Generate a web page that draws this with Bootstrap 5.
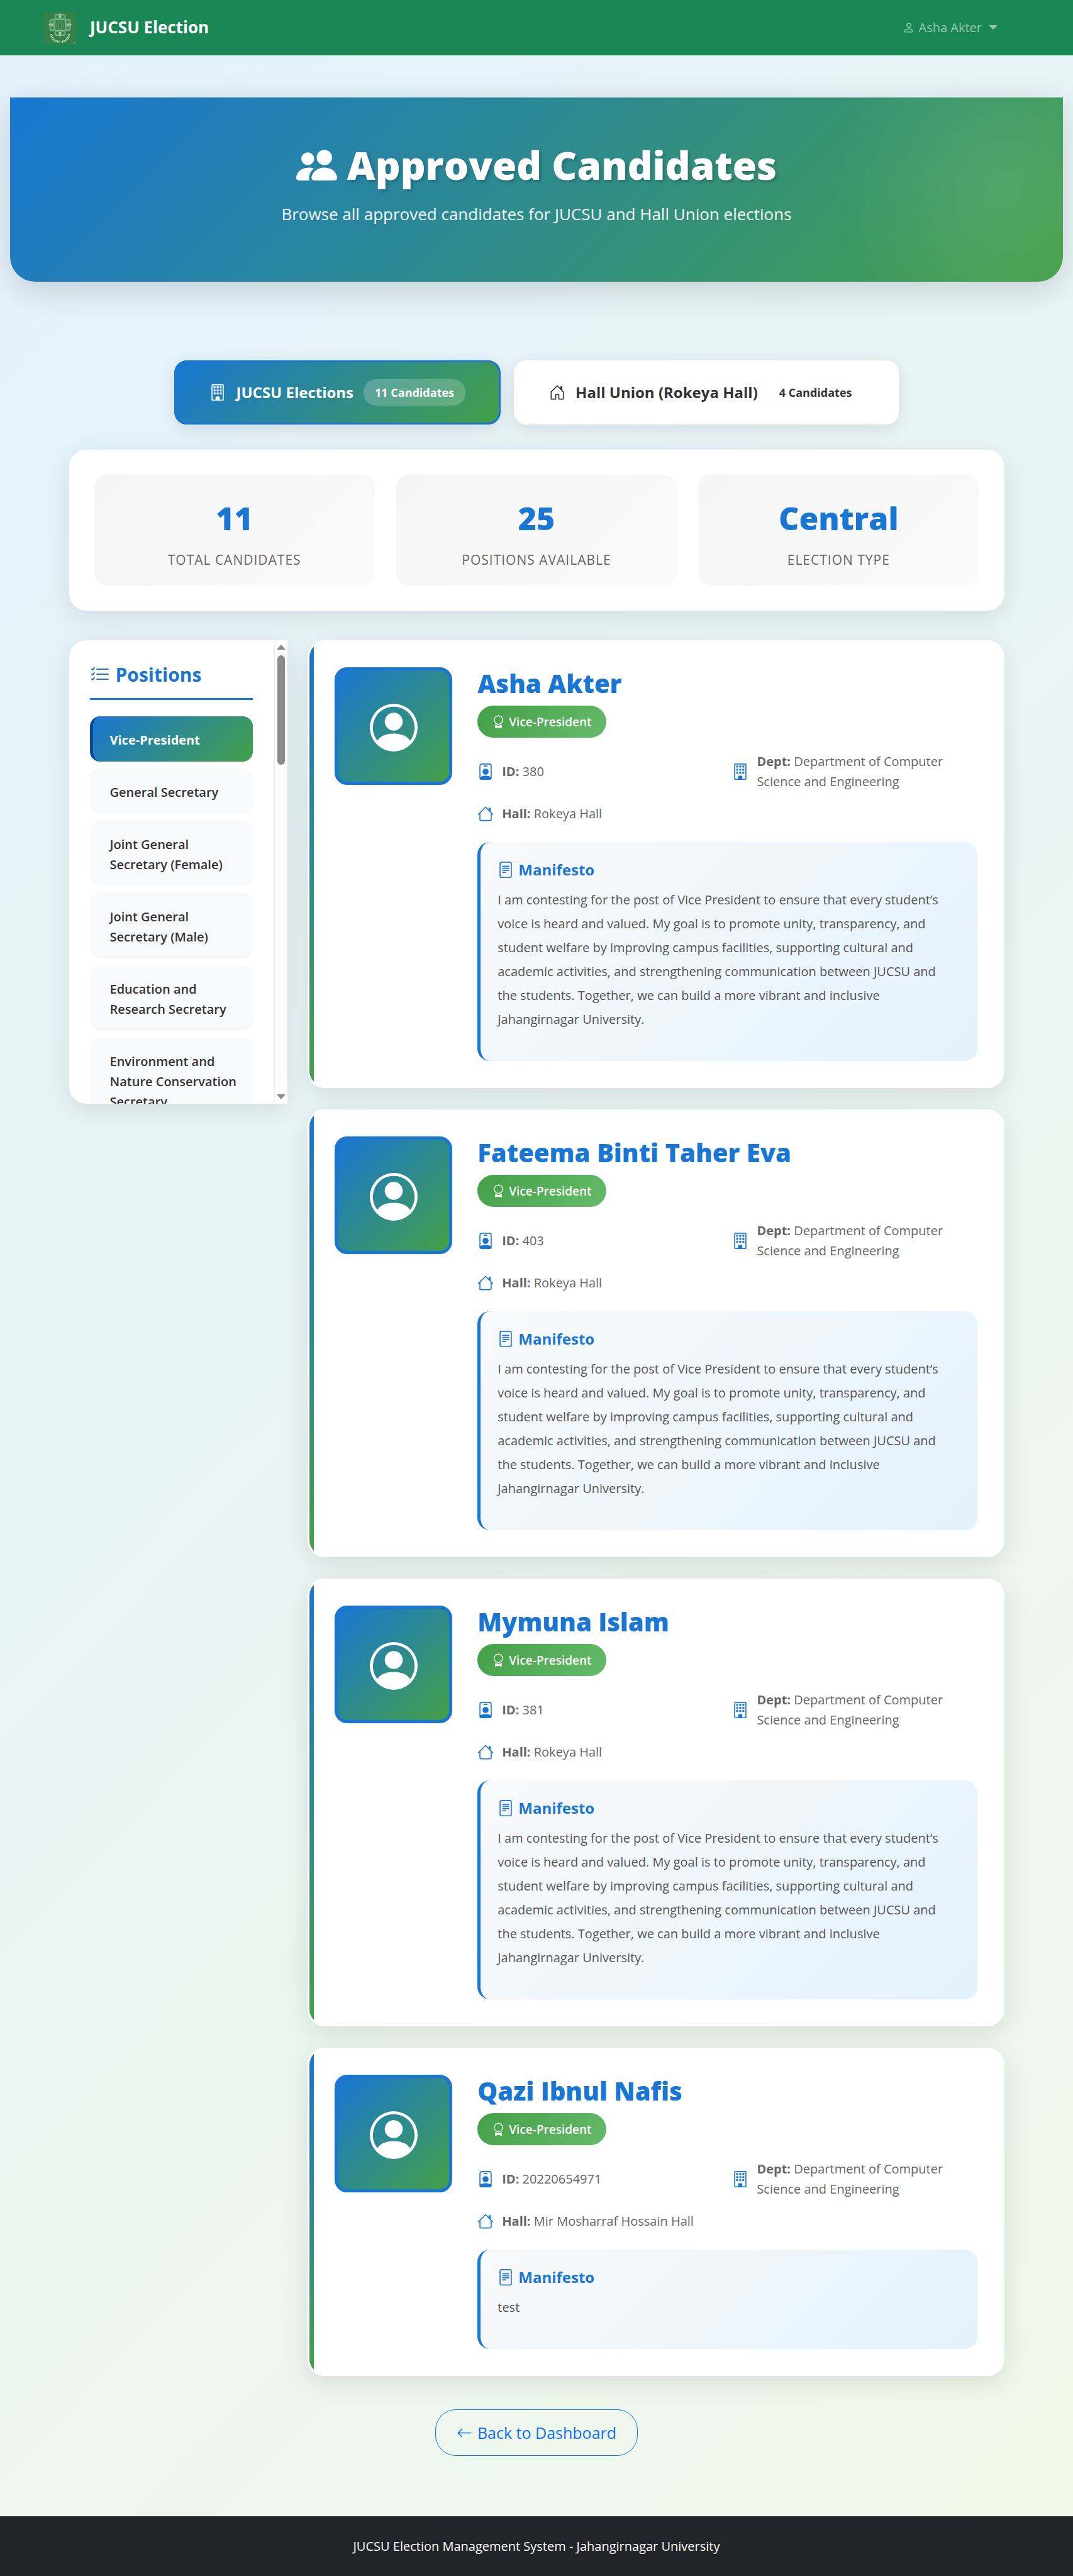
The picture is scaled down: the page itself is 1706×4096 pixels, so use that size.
<!DOCTYPE html>
<html lang="en">
<head>
<meta charset="utf-8">
<meta name="viewport" content="width=device-width, initial-scale=1">
<title>Approved Candidates - JUCSU Election</title>
<link href="https://cdn.jsdelivr.net/npm/bootstrap@5.3.0/dist/css/bootstrap.min.css" rel="stylesheet">
<style>
:root{--blue:#1976d2;--green:#43a047;--brand-grad:linear-gradient(135deg,#1976d2 0%,#43a047 100%)}
body{font-family:"Open Sans","Noto Sans",sans-serif;font-size:20px;line-height:32px;color:#333;background:linear-gradient(135deg,#e3f2fd 0%,#f1f8e9 100%);min-height:100vh}
.bi{width:1em;height:1em;fill:currentColor;flex:none}
.top-nav{background:#198754;height:88px;padding:0 112px 0 69px}
.brand-name{font-size:26px;line-height:32px;font-weight:700;color:#fff;margin-left:21px;padding-bottom:3px}
.crest{width:53px;height:53px}
.user-link{color:rgba(255,255,255,.55);font-size:20px;padding:8px}
.user-link:hover{color:#fff}
.user-link .bi{vertical-align:-3px}
.user-link.dropdown-toggle::after{margin-left:11px;border-width:7px 7px 0;vertical-align:4px}
.hero{margin:67px 16px 125px;padding:67px 32px 88px;color:#fff;border-radius:0 0 40px 40px;background:radial-gradient(circle 265px at calc(100% - 100px) 139px,rgba(255,255,255,.1),rgba(255,255,255,0)),var(--brand-grad);box-shadow:0 13px 53px rgba(0,0,0,.15)}
.hero h1{font-size:62px;line-height:80px;font-weight:800;margin:0 0 18px;gap:16px;text-shadow:3px 3px 5px rgba(0,0,0,.2)}
.hero h1 .bi{font-size:65px}
.hero p{font-size:26px;line-height:40px;margin:0;opacity:.95}
.page-wrap{max-width:1519px;padding:0 16px;margin:0 auto}
.tab-row{gap:21px}
.tab-btn{background:#fff;color:#333;border:3px solid transparent;background-clip:border-box;border-radius:20px;padding:27px 53px;height:102px;font-size:24px;font-weight:700;gap:16px;box-shadow:0 7px 27px rgba(0,0,0,.1)}
.tab-btn.active{background:var(--brand-grad) padding-box,#1976d2 border-box;border-color:var(--blue);color:#fff}
.tab-btn .bi{font-size:26px}
.tab-count{font-size:18px;font-weight:700;line-height:28px;padding:7px 18px;border-radius:20px;background:rgba(255,255,255,.2)}
.panel{background:#fff;border-radius:27px;box-shadow:0 10px 40px rgba(0,0,0,.1)}
.stats{padding:40px;gap:34px;margin:40px 0 47px}
.stat-box{flex:1 1 0;height:176px;border-radius:20px;background:linear-gradient(135deg,#f5f5f5,#fafafa);text-align:center;padding:33px 20px 0}
.stat-num{font-size:50px;line-height:72px;font-weight:800;color:var(--blue)}
.stat-label{font-size:21px;line-height:32px;margin-top:14px;color:#666;letter-spacing:1px;text-transform:uppercase}
.layout-row{--bs-gutter-x:32px}
.side{height:737px;overflow:hidden;border-radius:27px 0 0 27px}
.side-inner{padding:35px 34px 0 33px;min-width:0}
.side h2{font-size:30px;line-height:40px;font-weight:700;color:var(--blue);gap:9px;padding-bottom:17px;margin:0 0 26px;border-bottom:3px solid var(--blue)}
.side h2 .bi{font-size:32px}
.pos-link{display:block;background:#f8f9fa;border-left:5px solid transparent;border-radius:16px;padding:22px 15px 18px 27px;font-size:20px;font-weight:600;color:#333;text-decoration:none;margin-bottom:11px}
.pos-link.active{background:var(--brand-grad) padding-box,#0d47a1 border-box;color:#fff;font-weight:700}
.scroll-track{width:21px;background:#fcfcfc;border-left:1px solid #edf3f5;padding:7px 0;flex:none}
.scroll-track svg{width:14px;height:8px;fill:#8b8b8b}
.scroll-thumb{width:12px;height:174px;border-radius:6px;background:#8b8b8b;margin-top:9px}
.cand{position:relative;overflow:hidden;border:3px solid #fff;padding:40px;gap:40px;margin-bottom:34px}
.cand::before{content:"";position:absolute;left:0;top:0;bottom:0;width:7px;background:linear-gradient(180deg,#1976d2,#43a047)}
.avatar{width:187px;height:187px;flex:none;border:5px solid var(--blue);border-radius:20px;background:var(--brand-grad);color:#fff}
.avatar .bi{font-size:76px;margin-top:5px}
.cand h3{font-size:40px;line-height:51px;font-weight:800;color:var(--blue);margin:0 0 10px}
.post-pill{display:inline-flex;align-items:center;gap:6px;height:51px;padding:0 23px;border-radius:26px;font-size:19px;font-weight:600;color:#fff;background:linear-gradient(135deg,#43a047,#66bb6a)}
.post-pill .bi{font-size:21px}
.facts{display:grid;grid-template-columns:1fr 1fr;column-gap:16px;row-gap:19px;margin:22px 0 29px;color:#666;font-size:20px}
.fact{gap:13px}
.fact .bi{font-size:26px;color:var(--blue)}
.manifesto{border-left:5px solid var(--blue);border-radius:20px;padding:28px 40px 26px 27px;background:linear-gradient(135deg,#f8f9fa,#e3f2fd);color:#555}
.manifesto h4{font-size:24px;line-height:31px;font-weight:700;color:var(--blue);gap:7px;margin:0 0 14px}
.manifesto h4 .bi{font-size:26px}
.manifesto p{font-size:20px;line-height:38px;margin:0 0 21px}
.back-row{margin-top:53px}
.back-btn{font-size:25px;line-height:40px;padding:16px 33px;border-radius:33px;gap:8px}
.site-foot{background:#212529;color:#fff;height:96px;margin-top:96px;font-size:20px}
.site-foot p{margin:0}
</style>
</head>
<body class="d-flex flex-column">
<svg class="d-none" xmlns="http://www.w3.org/2000/svg">
<symbol id="i-people" viewBox="0 0 16 16"><path d="M7 14s-1 0-1-1 1-4 5-4 5 3 5 4-1 1-1 1zm4-6a3 3 0 1 0 0-6 3 3 0 0 0 0 6m-5.784 6A2.240 2.240 0 0 1 5 13c0-1.355.68-2.750 1.936-3.720A6.300 6.300 0 0 0 5 9c-4 0-5 3-5 4s1 1 1 1zM4.500 8a2.500 2.500 0 1 0 0-5 2.500 2.500 0 0 0 0 5"/></symbol>
<symbol id="i-person" viewBox="0 0 16 16"><path d="M8 8a3 3 0 1 0 0-6 3 3 0 0 0 0 6m2-3a2 2 0 1 1-4 0 2 2 0 0 1 4 0m4 8c0 1-1 1-1 1H3s-1 0-1-1 1-4 6-4 6 3 6 4m-1-.004c-.001-.246-.154-.986-.832-1.664C11.516 10.680 10.289 10 8 10s-3.516.68-4.168 1.332c-.678.678-.83 1.418-.832 1.664z"/></symbol>
<symbol id="i-building" viewBox="0 0 16 16"><path d="M4 2.500a.5.5 0 0 1 .5-.5h1a.5.5 0 0 1 .5.5v1a.5.5 0 0 1-.5.5h-1a.5.5 0 0 1-.5-.5zm3 0a.5.5 0 0 1 .5-.5h1a.5.5 0 0 1 .5.5v1a.5.5 0 0 1-.5.5h-1a.5.5 0 0 1-.5-.5zm3.500-.5a.5.5 0 0 0-.5.5v1a.5.5 0 0 0 .5.5h1a.5.5 0 0 0 .5-.5v-1a.5.5 0 0 0-.5-.5zM4 5.500a.5.5 0 0 1 .5-.5h1a.5.5 0 0 1 .5.5v1a.5.5 0 0 1-.5.5h-1a.5.5 0 0 1-.5-.5zM7.500 5a.5.5 0 0 0-.5.5v1a.5.5 0 0 0 .5.5h1a.5.5 0 0 0 .5-.5v-1a.5.5 0 0 0-.5-.5zm2.500.5a.5.5 0 0 1 .5-.5h1a.5.5 0 0 1 .5.5v1a.5.5 0 0 1-.5.5h-1a.5.5 0 0 1-.5-.5zM4.500 8a.5.5 0 0 0-.5.5v1a.5.5 0 0 0 .5.5h1a.5.5 0 0 0 .5-.5v-1a.5.5 0 0 0-.5-.5zm2.500.5a.5.5 0 0 1 .5-.5h1a.5.5 0 0 1 .5.5v1a.5.5 0 0 1-.5.5h-1a.5.5 0 0 1-.5-.5zm3.500-.5a.5.5 0 0 0-.5.5v1a.5.5 0 0 0 .5.5h1a.5.5 0 0 0 .5-.5v-1a.5.5 0 0 0-.5-.5z"/><path d="M2 1a1 1 0 0 1 1-1h10a1 1 0 0 1 1 1v14a1 1 0 0 1-1 1H3a1 1 0 0 1-1-1zm11 0H3v14h3v-2.500a.5.5 0 0 1 .5-.5h3a.5.5 0 0 1 .5.5V15h3z"/></symbol>
<symbol id="i-housedoor" viewBox="0 0 16 16"><path d="M8.354 1.146a.5.5 0 0 0-.708 0l-6 6A.5.5 0 0 0 1.500 7.500v7a.5.5 0 0 0 .5.5h4.500a.5.5 0 0 0 .5-.5v-4h2v4a.5.5 0 0 0 .5.5H14a.5.5 0 0 0 .5-.5v-7a.5.5 0 0 0-.146-.354L13 5.793V2.500a.5.5 0 0 0-.5-.5h-1a.5.5 0 0 0-.5.5v1.293zM2.500 14V7.707l5.500-5.500 5.500 5.500V14H10v-4a.5.5 0 0 0-.5-.5h-3a.5.5 0 0 0-.5.5v4z"/></symbol>
<symbol id="i-house" viewBox="0 0 16 16"><path d="M8.707 1.500a1 1 0 0 0-1.414 0L.646 8.146a.5.5 0 0 0 .708.708L2 8.207V13.500A1.500 1.500 0 0 0 3.500 15h9a1.500 1.500 0 0 0 1.500-1.500V8.207l.646.647a.5.5 0 0 0 .708-.708L13 5.793V2.500a.5.5 0 0 0-.5-.5h-1a.5.5 0 0 0-.5.5v1.293zM13 7.207V13.500a.5.5 0 0 1-.5.5h-9a.5.5 0 0 1-.5-.5V7.207l5-5z"/></symbol>
<symbol id="i-listcheck" viewBox="0 0 16 16"><path fill-rule="evenodd" d="M5 11.500a.5.5 0 0 1 .5-.5h9a.5.5 0 0 1 0 1h-9a.5.5 0 0 1-.5-.5m0-4a.5.5 0 0 1 .5-.5h9a.5.5 0 0 1 0 1h-9a.5.5 0 0 1-.5-.5m0-4a.5.5 0 0 1 .5-.5h9a.5.5 0 0 1 0 1h-9a.5.5 0 0 1-.5-.5M3.854 2.146a.5.5 0 0 1 0 .708l-1.500 1.500a.5.5 0 0 1-.708 0l-.5-.5a.5.5 0 1 1 .708-.708L2 3.293l1.146-1.147a.5.5 0 0 1 .708 0m0 4a.5.5 0 0 1 0 .708l-1.500 1.500a.5.5 0 0 1-.708 0l-.5-.5a.5.5 0 1 1 .708-.708L2 7.293l1.146-1.147a.5.5 0 0 1 .708 0m0 4a.5.5 0 0 1 0 .708l-1.500 1.500a.5.5 0 0 1-.708 0l-.5-.5a.5.5 0 0 1 .708-.708l.146.147 1.146-1.147a.5.5 0 0 1 .708 0"/></symbol>
<symbol id="i-circle" viewBox="0 0 16 16"><path d="M11 6a3 3 0 1 1-6 0 3 3 0 0 1 6 0"/><path fill-rule="evenodd" d="M0 8a8 8 0 1 1 16 0A8 8 0 0 1 0 8m8-7a7 7 0 0 0-5.468 11.370C3.242 11.226 4.805 10 8 10s4.757 1.225 5.468 2.370A7 7 0 0 0 8 1"/></symbol>
<symbol id="i-award" viewBox="0 0 16 16"><path d="M9.669.864 8 0 6.331.864l-1.858.282-.842 1.680-1.337 1.320L2.600 6l-.306 1.854 1.337 1.320.842 1.680 1.858.282L8 12l1.669-.864 1.858-.282.842-1.680 1.337-1.320L13.400 6l.306-1.854-1.337-1.320-.842-1.680zm1.196 1.193.684 1.365 1.086 1.072L12.387 6l.248 1.506-1.086 1.072-.684 1.365-1.510.229L8 10.874l-1.355-.702-1.510-.229-.684-1.365-1.086-1.072L3.614 6l-.25-1.506 1.087-1.072.684-1.365 1.510-.229L8 1.126l1.356.702z"/><path d="M4 11.794V16l4-1 4 1v-4.206l-2.018.306L8 13.126 6.018 12.100z"/></symbol>
<symbol id="i-badge" viewBox="0 0 16 16"><path d="M6.500 2a.5.5 0 0 0 0 1h3a.5.5 0 0 0 0-1zM11 8a3 3 0 1 1-6 0 3 3 0 0 1 6 0"/><path d="M4.500 0A2.500 2.500 0 0 0 2 2.500V14a2 2 0 0 0 2 2h8a2 2 0 0 0 2-2V2.500A2.500 2.500 0 0 0 11.500 0zM3 2.500A1.500 1.500 0 0 1 4.500 1h7A1.500 1.500 0 0 1 13 2.500v10.795a4.200 4.200 0 0 0-.776-.492C11.392 12.387 10.063 12 8 12s-3.392.387-4.224.803a4.200 4.200 0 0 0-.776.492z"/></symbol>
<symbol id="i-file" viewBox="0 0 16 16"><path d="M5 4a.5.5 0 0 0 0 1h6a.5.5 0 0 0 0-1zm-.5 2.500A.5.5 0 0 1 5 6h6a.5.5 0 0 1 0 1H5a.5.5 0 0 1-.5-.5M5 8a.5.5 0 0 0 0 1h6a.5.5 0 0 0 0-1zm0 2a.5.5 0 0 0 0 1h3a.5.5 0 0 0 0-1z"/><path d="M2 2a2 2 0 0 1 2-2h8a2 2 0 0 1 2 2v12a2 2 0 0 1-2 2H4a2 2 0 0 1-2-2zm10-1H4a1 1 0 0 0-1 1v12a1 1 0 0 0 1 1h8a1 1 0 0 0 1-1V2a1 1 0 0 0-1-1"/></symbol>
<symbol id="i-arrow" viewBox="0 0 16 16"><path fill-rule="evenodd" d="M15 8a.5.5 0 0 0-.5-.5H2.707l3.147-3.146a.5.5 0 1 0-.708-.708l-4 4a.5.5 0 0 0 0 .708l4 4a.5.5 0 0 0 .708-.708L2.707 8.500H14.500A.5.5 0 0 0 15 8"/></symbol>
</svg>

<nav class="top-nav navbar flex-nowrap justify-content-between">
  <a class="navbar-brand d-flex align-items-center p-0 m-0" href="#">
    <svg class="crest" viewBox="0 0 60 60" aria-hidden="true">
      <rect width="60" height="60" fill="#338149"/>
      <g fill="#5da070" stroke="#8cc39b" stroke-width="1"><rect x="20.500" y="5.500" width="19" height="9" rx="2"/><rect x="11.500" y="14.500" width="9" height="20" rx="2"/><rect x="39.500" y="14.500" width="9" height="20" rx="2"/><rect x="20.500" y="34.500" width="19" height="9" rx="2"/></g>
      <path d="M30 3l3 4h-6zM30 46l3-4h-6zM9 24l4-3v6zM51 24l-4-3v6z" fill="#a9d4b4"/>
      <g fill="#338149"><circle cx="25" cy="10" r="2"/><circle cx="35" cy="10" r="2"/><circle cx="16" cy="19" r="2"/><circle cx="16" cy="30" r="2"/><circle cx="44" cy="19" r="2"/><circle cx="44" cy="30" r="2"/><circle cx="25" cy="39" r="2"/><circle cx="35" cy="39" r="2"/></g>
      <g fill="#a9d4b4"><circle cx="30" cy="10" r="2"/><circle cx="16" cy="24" r="2"/><circle cx="44" cy="24" r="2"/><circle cx="30" cy="39" r="2"/></g>
      <rect x="21" y="15" width="18" height="19" fill="#338149" stroke="#8cc39b"/>
      <path d="M26 17q-4 9-2 12l3 2q2-3 0-8zM34 17q4 9 2 12l-3 2q-2-3 0-8zM30 17q-4 8-3 12l3 3 3-3q1-4-3-12M30 31v3" fill="none" stroke="#5f9a68" stroke-width="1"/>
      <path d="M14 41q1 12 15 14M46 41q-1 12-14 14" fill="none" stroke="#a9d4b4" stroke-width="4" stroke-dasharray="2 1"/>
      <circle cx="56" cy="57" r="1" fill="#8cc39b"/>
    </svg>
    <span class="brand-name">JUCSU Election</span>
  </a>
  <div class="dropdown">
    <a class="user-link dropdown-toggle text-decoration-none" href="#" role="button" data-bs-toggle="dropdown"><svg class="bi"><use href="#i-person"/></svg> Asha Akter</a>
  </div>
</nav>

<header class="hero text-center">
  <h1 class="d-flex justify-content-center align-items-center"><svg class="bi"><use href="#i-people"/></svg>Approved Candidates</h1>
  <p>Browse all approved candidates for JUCSU and Hall Union elections</p>
</header>

<main class="page-wrap w-100">
  <div class="tab-row d-flex justify-content-center flex-wrap">
    <button type="button" class="tab-btn active d-flex align-items-center"><svg class="bi"><use href="#i-building"/></svg>JUCSU Elections<span class="tab-count">11 Candidates</span></button>
    <button type="button" class="tab-btn d-flex align-items-center"><svg class="bi"><use href="#i-housedoor"/></svg>Hall Union (Rokeya Hall)<span class="tab-count">4 Candidates</span></button>
  </div>

  <section class="panel stats d-flex">
    <div class="stat-box"><div class="stat-num">11</div><div class="stat-label">Total Candidates</div></div>
    <div class="stat-box"><div class="stat-num">25</div><div class="stat-label">Positions Available</div></div>
    <div class="stat-box"><div class="stat-num">Central</div><div class="stat-label">Election Type</div></div>
  </section>

  <div class="row layout-row">
    <aside class="col-3">
      <div class="side panel d-flex">
        <div class="side-inner flex-grow-1">
          <h2 class="d-flex align-items-center"><svg class="bi"><use href="#i-listcheck"/></svg>Positions</h2>
          <nav>
            <a class="pos-link active" href="#">Vice-President</a>
            <a class="pos-link" href="#">General Secretary</a>
            <a class="pos-link" href="#">Joint General Secretary (Female)</a>
            <a class="pos-link" href="#">Joint General Secretary (Male)</a>
            <a class="pos-link" href="#">Education and Research Secretary</a>
            <a class="pos-link" href="#">Environment and Nature Conservation Secretary</a>
          </nav>
        </div>
        <div class="scroll-track d-flex flex-column align-items-center" aria-hidden="true">
          <svg viewBox="0 0 14 8"><path d="M7 0l7 8H0z"/></svg>
          <div class="scroll-thumb"></div>
          <svg class="mt-auto" viewBox="0 0 14 8"><path d="M7 8L0 0h14z"/></svg>
        </div>
      </div>
    </aside>

    <div class="col-9">
      <article class="cand panel d-flex align-items-start">
        <div class="avatar d-flex align-items-center justify-content-center"><svg class="bi"><use href="#i-circle"/></svg></div>
        <div class="flex-grow-1">
          <h3>Asha Akter</h3>
          <div class="d-flex"><span class="post-pill"><svg class="bi"><use href="#i-award"/></svg>Vice-President</span></div>
          <div class="facts">
            <div class="fact d-flex align-items-center"><svg class="bi"><use href="#i-badge"/></svg><span><strong>ID:</strong> 380</span></div>
            <div class="fact d-flex align-items-center"><svg class="bi"><use href="#i-building"/></svg><span><strong>Dept:</strong> Department of Computer Science and Engineering</span></div>
            <div class="fact d-flex align-items-center"><svg class="bi"><use href="#i-house"/></svg><span><strong>Hall:</strong> Rokeya Hall</span></div>
          </div>
          <div class="manifesto">
            <h4 class="d-flex align-items-center"><svg class="bi"><use href="#i-file"/></svg>Manifesto</h4>
            <p>I am contesting for the post of Vice President to ensure that every student’s voice is heard and valued. My goal is to promote unity, transparency, and student welfare by improving campus facilities, supporting cultural and academic activities, and strengthening communication between JUCSU and the students. Together, we can build a more vibrant and inclusive Jahangirnagar University.</p>
          </div>
        </div>
      </article>

      <article class="cand panel d-flex align-items-start">
        <div class="avatar d-flex align-items-center justify-content-center"><svg class="bi"><use href="#i-circle"/></svg></div>
        <div class="flex-grow-1">
          <h3>Fateema Binti Taher Eva</h3>
          <div class="d-flex"><span class="post-pill"><svg class="bi"><use href="#i-award"/></svg>Vice-President</span></div>
          <div class="facts">
            <div class="fact d-flex align-items-center"><svg class="bi"><use href="#i-badge"/></svg><span><strong>ID:</strong> 403</span></div>
            <div class="fact d-flex align-items-center"><svg class="bi"><use href="#i-building"/></svg><span><strong>Dept:</strong> Department of Computer Science and Engineering</span></div>
            <div class="fact d-flex align-items-center"><svg class="bi"><use href="#i-house"/></svg><span><strong>Hall:</strong> Rokeya Hall</span></div>
          </div>
          <div class="manifesto">
            <h4 class="d-flex align-items-center"><svg class="bi"><use href="#i-file"/></svg>Manifesto</h4>
            <p>I am contesting for the post of Vice President to ensure that every student’s voice is heard and valued. My goal is to promote unity, transparency, and student welfare by improving campus facilities, supporting cultural and academic activities, and strengthening communication between JUCSU and the students. Together, we can build a more vibrant and inclusive Jahangirnagar University.</p>
          </div>
        </div>
      </article>

      <article class="cand panel d-flex align-items-start">
        <div class="avatar d-flex align-items-center justify-content-center"><svg class="bi"><use href="#i-circle"/></svg></div>
        <div class="flex-grow-1">
          <h3>Mymuna Islam</h3>
          <div class="d-flex"><span class="post-pill"><svg class="bi"><use href="#i-award"/></svg>Vice-President</span></div>
          <div class="facts">
            <div class="fact d-flex align-items-center"><svg class="bi"><use href="#i-badge"/></svg><span><strong>ID:</strong> 381</span></div>
            <div class="fact d-flex align-items-center"><svg class="bi"><use href="#i-building"/></svg><span><strong>Dept:</strong> Department of Computer Science and Engineering</span></div>
            <div class="fact d-flex align-items-center"><svg class="bi"><use href="#i-house"/></svg><span><strong>Hall:</strong> Rokeya Hall</span></div>
          </div>
          <div class="manifesto">
            <h4 class="d-flex align-items-center"><svg class="bi"><use href="#i-file"/></svg>Manifesto</h4>
            <p>I am contesting for the post of Vice President to ensure that every student’s voice is heard and valued. My goal is to promote unity, transparency, and student welfare by improving campus facilities, supporting cultural and academic activities, and strengthening communication between JUCSU and the students. Together, we can build a more vibrant and inclusive Jahangirnagar University.</p>
          </div>
        </div>
      </article>

      <article class="cand panel d-flex align-items-start mb-0">
        <div class="avatar d-flex align-items-center justify-content-center"><svg class="bi"><use href="#i-circle"/></svg></div>
        <div class="flex-grow-1">
          <h3>Qazi Ibnul Nafis</h3>
          <div class="d-flex"><span class="post-pill"><svg class="bi"><use href="#i-award"/></svg>Vice-President</span></div>
          <div class="facts">
            <div class="fact d-flex align-items-center"><svg class="bi"><use href="#i-badge"/></svg><span><strong>ID:</strong> 20220654971</span></div>
            <div class="fact d-flex align-items-center"><svg class="bi"><use href="#i-building"/></svg><span><strong>Dept:</strong> Department of Computer Science and Engineering</span></div>
            <div class="fact d-flex align-items-center"><svg class="bi"><use href="#i-house"/></svg><span><strong>Hall:</strong> Mir Mosharraf Hossain Hall</span></div>
          </div>
          <div class="manifesto">
            <h4 class="d-flex align-items-center"><svg class="bi"><use href="#i-file"/></svg>Manifesto</h4>
            <p>test</p>
          </div>
        </div>
      </article>
    </div>
  </div>

  <div class="back-row d-flex justify-content-center">
    <a class="btn btn-outline-primary back-btn d-inline-flex align-items-center" href="#"><svg class="bi"><use href="#i-arrow"/></svg>Back to Dashboard</a>
  </div>
</main>

<footer class="site-foot d-flex align-items-center justify-content-center">
  <p>JUCSU Election Management System - Jahangirnagar University</p>
</footer>
<script src="https://cdn.jsdelivr.net/npm/bootstrap@5.3.0/dist/js/bootstrap.bundle.min.js"></script>
</body>
</html>
